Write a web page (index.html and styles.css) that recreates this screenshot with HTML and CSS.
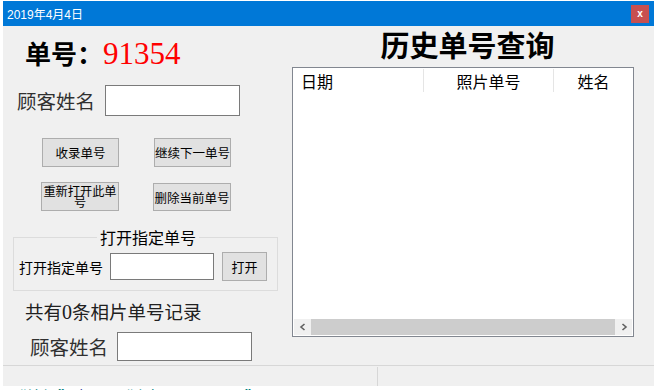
FILE: index.html
```
<!DOCTYPE html>
<html lang="zh-CN">
<head>
  <meta charset="UTF-8">
  <title>2019年4月4日</title>
  <link rel="stylesheet" href="styles.css">
</head>
<body>
  <div class="window">
    <div class="titlebar">
      <span class="title">2019年4月4日</span>
      <button class="close" aria-label="关闭">x</button>
    </div>

    <div class="client">
      <!-- 左侧：当前单号 -->
      <div class="left">
        <div class="order-no">
          <span class="order-label">单号：</span><span class="order-value">91354</span>
        </div>

        <div class="field field-top">
          <label class="field-label">顾客姓名</label>
          <input type="text" class="textbox">
        </div>

        <div class="btn-grid">
          <button class="btn">收录单号</button>
          <button class="btn">继续下一单号</button>
          <button class="btn btn-wrap">重新打开此单号</button>
          <button class="btn btn-shift">删除当前单号</button>
        </div>

        <fieldset class="group">
          <legend class="group-title">打开指定单号</legend>
          <div class="group-row">
            <label class="group-label">打开指定单号</label>
            <input type="text" class="textbox textbox-small">
            <button class="btn btn-open">打开</button>
          </div>
        </fieldset>

        <div class="count">共有<span class="num">0</span>条相片单号记录</div>

        <div class="field field-bottom">
          <label class="field-label">顾客姓名</label>
          <input type="text" class="textbox">
        </div>
      </div>

      <!-- 右侧：历史单号 -->
      <div class="right">
        <h1 class="history-title">历史单号查询</h1>
        <div class="listview">
          <div class="lv-head">
            <div class="lv-col lv-date">日期</div>
            <div class="lv-col lv-no">照片单号</div>
            <div class="lv-col lv-name">姓名</div>
          </div>
          <div class="lv-body"></div>
          <div class="hscroll">
            <svg class="arrow" viewBox="0 0 8 8" width="8" height="8"><path d="M5.5 1 L2 4 L5.5 7" fill="none" stroke="#606060" stroke-width="1.6"/></svg>
            <div class="thumb"></div>
            <svg class="arrow" viewBox="0 0 8 8" width="8" height="8"><path d="M2.5 1 L6 4 L2.5 7" fill="none" stroke="#606060" stroke-width="1.6"/></svg>
          </div>
        </div>
      </div>
    </div>

    <div class="statusbar">
      <div class="status-cell status-first"></div>
      <div class="status-cell"></div>
    </div>
  </div>

  <div class="behind"><span class="teal">“编辑”</span> <span class="navy">打 开</span> <span class="teal">“窗相同界面显示”</span></div>
</body>
</html>
```

FILE: styles.css
```
* {
  margin: 0;
  padding: 0;
  box-sizing: border-box;
}

body {
  background: #ffffff;
  font-family: "Noto Sans CJK SC", "Liberation Sans", sans-serif;
  color: #000000;
  overflow: hidden;
}

/* 窗口 */
.window {
  width: 651px;
  margin: 1px 0 0 3px;
  background: #f0f0f0;
}

.titlebar {
  height: 25px;
  background: #0078d7;
  color: #ffffff;
  display: flex;
  align-items: center;
  justify-content: space-between;
  padding: 0 5px 0 4px;
}

.title {
  font-family: "Liberation Sans", "Noto Sans CJK SC", sans-serif;
  font-size: 12px;
}

.close {
  width: 18px;
  height: 18px;
  border: none;
  background: #c75050;
  color: #ffffff;
  font-family: "Liberation Sans", sans-serif;
  font-size: 10px;
  font-weight: bold;
  line-height: 18px;
}

.client {
  height: 339px;
  display: flex;
}

/* 左侧 */
.left {
  width: 289px;
  display: flex;
  flex-direction: column;
}

.order-no {
  margin-top: 12px;
  padding-left: 22px;
  height: 30px;
  display: flex;
  align-items: baseline;
}

.order-label {
  font-size: 26px;
  line-height: 30px;
  font-weight: bold;
}

.order-value {
  font-family: "Liberation Serif", serif;
  font-size: 31px;
  line-height: 30px;
  color: #ff0000;
}

.field {
  display: flex;
  align-items: center;
}

.field-top {
  margin-top: 17px;
  padding-left: 14px;
  gap: 10px;
}

.field-bottom {
  margin-top: 8px;
  padding-left: 27px;
  gap: 9px;
}

.field-label {
  font-size: 19.5px;
  color: #303030;
}

.textbox {
  width: 135px;
  height: 31px;
  border: 1px solid #7a7a7a;
  background: #ffffff;
}

.field-bottom .textbox {
  height: 29px;
}

.btn-grid {
  margin-top: 22px;
  padding-left: 39px;
  display: grid;
  grid-template-columns: 77px 77px;
  grid-auto-rows: 29px;
  column-gap: 35px;
  row-gap: 15px;
}

.btn {
  background: #e1e1e1;
  border: 1px solid #adadad;
  font-family: "Noto Sans CJK SC", sans-serif;
  font-size: 12.5px;
  color: #000000;
}

.btn-wrap {
  margin-left: -1px;
  line-height: 11px;
  font-size: 12.2px;
  padding: 0;
}

.btn-shift {
  margin: 1px 0 0 -1px;
}

/* 分组框 */
.group {
  margin: 17px 0 0 10px;
  width: 265px;
  border: 1px solid #dcdcdc;
  padding: 6px 0 9px 5px;
}

.group-title {
  margin: 0 auto;
  padding: 0 3px;
  font-size: 16px;
  line-height: 18px;
}

.group-row {
  display: flex;
  align-items: center;
}

.group-label {
  font-size: 14px;
}

.textbox-small {
  width: 104px;
  height: 27px;
  margin-left: 7px;
}

.btn-open {
  width: 45px;
  height: 29px;
  margin-left: 8px;
  font-size: 13px;
}

.count {
  margin-top: 8px;
  padding-left: 22px;
  font-size: 18.5px;
  line-height: 24px;
  color: #202020;
}

.num {
  font-family: "Liberation Serif", serif;
  font-size: 20px;
}

/* 右侧 */
.right {
  width: 342px;
  display: flex;
  flex-direction: column;
}

.history-title {
  margin-top: 2px;
  padding-left: 9px;
  text-align: center;
  font-size: 29px;
  line-height: 32px;
  font-weight: bold;
}

.listview {
  margin-top: 7px;
  height: 270px;
  border: 1px solid #828790;
  background: #ffffff;
  display: flex;
  flex-direction: column;
}

.lv-head {
  height: 24px;
  display: flex;
  font-size: 16px;
  line-height: 24px;
}

.lv-col {
  border-right: 1px solid #e5e5e5;
  margin-top: 1px;
  height: 23px;
}

.lv-date {
  width: 131px;
  padding-left: 8px;
}

.lv-no {
  width: 130px;
  text-align: center;
}

.lv-name {
  flex: 1;
  text-align: center;
  border-right: none;
}

.lv-body {
  flex: 1;
}

.hscroll {
  height: 16px;
  margin: 0 1px 1px 1px;
  background: #f0f0f0;
  display: flex;
  align-items: center;
}

.arrow {
  margin: 0 4px 0 5px;
}

.thumb {
  flex: 1;
  height: 16px;
  background: #cdcdcd;
}

/* 状态栏 */
.statusbar {
  height: 21px;
  border-top: 1px solid #d7d7d7;
  display: flex;
}

.status-cell {
  flex: 1;
}

.status-first {
  flex: none;
  width: 375px;
  margin-top: 1px;
  border-right: 1px solid #d7d7d7;
}

/* 后面窗口露出的文字 */
.behind {
  padding-left: 10px;
  font-size: 16px;
  line-height: 16px;
  margin-top: 2px;
}

.teal {
  color: #008080;
}

.navy {
  color: #000080;
}
```
